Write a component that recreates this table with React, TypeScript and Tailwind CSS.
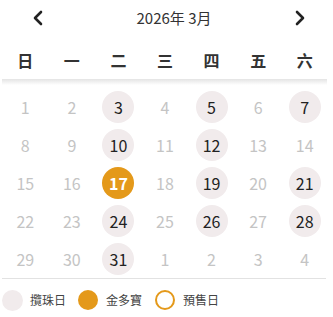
import React from "react";

const WEEKDAYS = ["日", "一", "二", "三", "四", "五", "六"];

type Kind = "plain" | "draw" | "jackpot";

// draw dates for March 2026; the 17th carries the jackpot
const DRAWS = [3, 5, 7, 10, 12, 19, 21, 24, 26, 28, 31];

// March 2026 starts on a Sunday; trailing days belong to April
const days: { n: number; kind: Kind; outside?: boolean }[] = [
  ...Array.from({ length: 31 }, (_, i) => {
    const n = i + 1;
    let kind: Kind = "plain";
    if (n === 17) kind = "jackpot";
    else if (DRAWS.includes(n)) kind = "draw";
    return { n, kind };
  }),
  ...[1, 2, 3, 4].map((n) => ({ n, kind: "plain" as Kind, outside: true })),
];

const Chevron = ({ dir }: { dir: "left" | "right" }) => (
  <svg width="12" height="16" viewBox="0 0 12 16" fill="none">
    <path
      d={dir === "left" ? "M9 2 L3 8 L9 14" : "M3 2 L9 8 L3 14"}
      stroke="#222"
      strokeWidth="2.6"
      strokeLinecap="round"
      strokeLinejoin="round"
    />
  </svg>
);

const DayCell = ({ n, kind }: { n: number; kind: Kind }) => {
  let cls = "text-[#c4c4c4]";
  if (kind === "draw") cls = "bg-[#f1ebec] text-[#222]";
  if (kind === "jackpot") cls = "bg-[#e4991a] text-white font-semibold";
  return (
    <div className="flex h-[38px] items-center justify-center">
      <div
        className={`flex h-[32px] w-[32px] items-center justify-center rounded-full text-[16px] ${cls}`}
      >
        {n}
      </div>
    </div>
  );
};

export default function App() {
  return (
    <div
      className="w-[333px] bg-white"
      style={{ fontFamily: '"Noto Sans CJK TC", "Noto Sans", sans-serif' }}
    >
      {/* month switcher */}
      <div className="flex h-[36px] items-center">
        <div className="flex w-[76px] justify-center">
          <Chevron dir="left" />
        </div>
        <div className="flex-1 pl-[5px] text-center text-[15px] text-[#333]">2026年 3月</div>
        <div className="flex w-[66px] justify-center">
          <Chevron dir="right" />
        </div>
      </div>

      {/* weekday header */}
      <div className="ml-[2px] grid h-[43px] w-[326px] grid-cols-7 items-center pt-[5px]">
        {WEEKDAYS.map((d) => (
          <div key={d} className="text-center text-[16px] font-bold text-[#333]">
            {d}
          </div>
        ))}
      </div>
      <div className="ml-[2px] h-[6px] w-[325px] bg-gradient-to-b from-[#e4e4e4] to-white" />

      {/* days */}
      <div className="ml-[2px] grid w-[326px] grid-cols-7 pt-[3px]">
        {days.map((d, i) => (
          <DayCell key={i} n={d.n} kind={d.kind} />
        ))}
      </div>
      <div className="ml-[2px] h-px w-[324px] bg-[#e2e2e2]" />

      {/* legend */}
      <div className="flex h-[42px] items-center pl-[2px] text-[12px] text-[#444]">
        <span className="h-[21px] w-[21px] rounded-full bg-[#f1ebec]" />
        <span className="ml-[7px]">攬珠日</span>
        <span className="ml-[12px] h-[20px] w-[20px] rounded-full bg-[#e4991a]" />
        <span className="ml-[8px]">金多寶</span>
        <span className="ml-[13px] h-[20px] w-[20px] rounded-full border-2 border-[#e4991a]" />
        <span className="ml-[8px]">預售日</span>
      </div>
    </div>
  );
}
